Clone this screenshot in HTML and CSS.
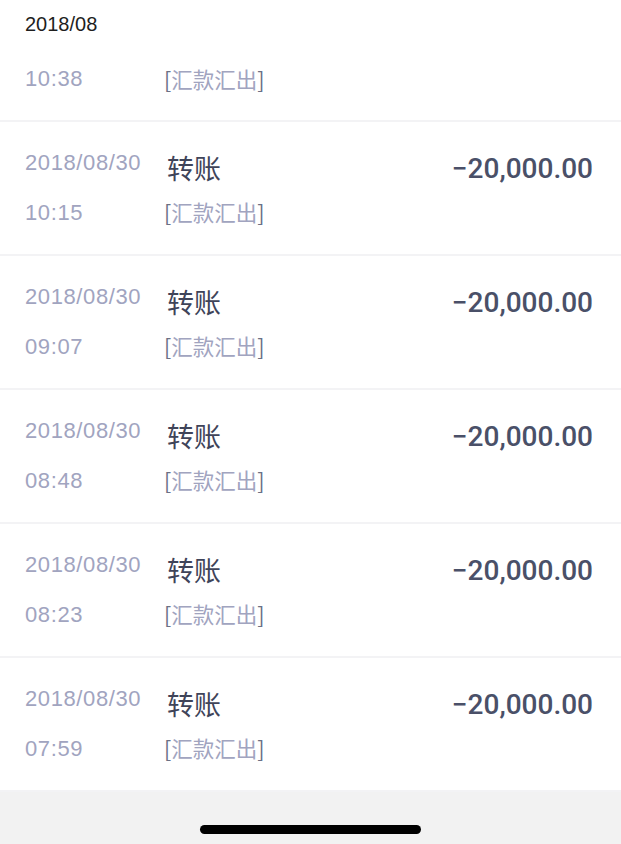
FILE: index.html
```html
<!DOCTYPE html>
<html lang="zh-CN">
<head>
    <meta charset="UTF-8">
    <meta name="viewport" content="width=device-width, initial-scale=1.0">
    <title>交易明细</title>
    <link rel="stylesheet" href="styles.css">
</head>
<body>
    <div class="screen">
        <!-- Month header -->
        <div class="month-header">2018/08</div>

        <div class="list">
            <!-- row scrolled mostly under the header -->
            <div class="row partial">
                <div class="when">
                    <span class="time">10:38</span>
                </div>
                <div class="what">
                    <span class="sub"><b>[</b>汇款汇出<b>]</b></span>
                </div>
            </div>
            <div class="row">
                <div class="when">
                    <span class="date">2018/08/30</span>
                    <span class="time">10:15</span>
                </div>
                <div class="what">
                    <span class="type">转账</span>
                    <span class="sub"><b>[</b>汇款汇出<b>]</b></span>
                </div>
                <div class="amount">&minus;20,000.00</div>
            </div>
            <div class="row">
                <div class="when">
                    <span class="date">2018/08/30</span>
                    <span class="time">09:07</span>
                </div>
                <div class="what">
                    <span class="type">转账</span>
                    <span class="sub"><b>[</b>汇款汇出<b>]</b></span>
                </div>
                <div class="amount">&minus;20,000.00</div>
            </div>
            <div class="row">
                <div class="when">
                    <span class="date">2018/08/30</span>
                    <span class="time">08:48</span>
                </div>
                <div class="what">
                    <span class="type">转账</span>
                    <span class="sub"><b>[</b>汇款汇出<b>]</b></span>
                </div>
                <div class="amount">&minus;20,000.00</div>
            </div>
            <div class="row">
                <div class="when">
                    <span class="date">2018/08/30</span>
                    <span class="time">08:23</span>
                </div>
                <div class="what">
                    <span class="type">转账</span>
                    <span class="sub"><b>[</b>汇款汇出<b>]</b></span>
                </div>
                <div class="amount">&minus;20,000.00</div>
            </div>
            <div class="row">
                <div class="when">
                    <span class="date">2018/08/30</span>
                    <span class="time">07:59</span>
                </div>
                <div class="what">
                    <span class="type">转账</span>
                    <span class="sub"><b>[</b>汇款汇出<b>]</b></span>
                </div>
                <div class="amount">&minus;20,000.00</div>
            </div>
        </div>

        <div class="home-bar">
            <div class="home-indicator"></div>
        </div>
    </div>
</body>
</html>
```

FILE: styles.css
```css
* {
    box-sizing: border-box;
}
body {
    margin: 0;
    font-family: 'Liberation Sans', 'Noto Sans CJK SC', sans-serif;
    background: #fff;
    overflow: hidden;
}
.screen {
    display: flex;
    flex-direction: column;
    height: 844px;
}
.month-header {
    height: 50px;
    padding: 12px 0 0 25px;
    background: #fff;
    color: #1e1e1e;
    font-size: 20px;
    line-height: 24px;
}
.list {
    flex: 1;
    overflow: hidden;
}
.row {
    display: flex;
    height: 134px;
    padding: 0 28px 0 25px;
    border-bottom: 2px solid #f3f3f5;
}
.row.partial {
    height: 72px;
}
.when {
    display: flex;
    flex-direction: column;
    width: 142px;
    padding-top: 28px;
    color: #a1a4bf;
    font-size: 22px;
    letter-spacing: 0.6px;
}
.partial .when,
.partial .what {
    padding-top: 16px;
}
.date {
    line-height: 26px;
}
.time {
    line-height: 26px;
}
.date + .time {
    margin-top: 24px;
}
.what {
    display: flex;
    flex-direction: column;
    flex: 1;
    padding-top: 29px;
}
.type {
    color: #3f4459;
    font-size: 27px;
    line-height: 34px;
    font-family: 'Noto Sans CJK SC', sans-serif;
}
.sub {
    margin-left: -3px;
    color: #a1a4bf;
    font-size: 21.5px;
    line-height: 26px;
    font-family: 'Noto Sans CJK SC', sans-serif;
}
.type + .sub {
    margin-top: 14px;
}
.sub b {
    font-weight: normal;
    color: #6b7085;
}
.amount {
    padding-top: 30px;
    color: #4a5068;
    font-family: Roboto, 'Liberation Sans', sans-serif;
    font-weight: 500;
    font-size: 28px;
    line-height: 34px;
}
.home-bar {
    height: 52px;
    background: #f2f2f2;
    display: flex;
    justify-content: center;
    padding-top: 33px;
}
.home-indicator {
    width: 221px;
    height: 9px;
    border-radius: 5px;
    background: #000;
}
```
